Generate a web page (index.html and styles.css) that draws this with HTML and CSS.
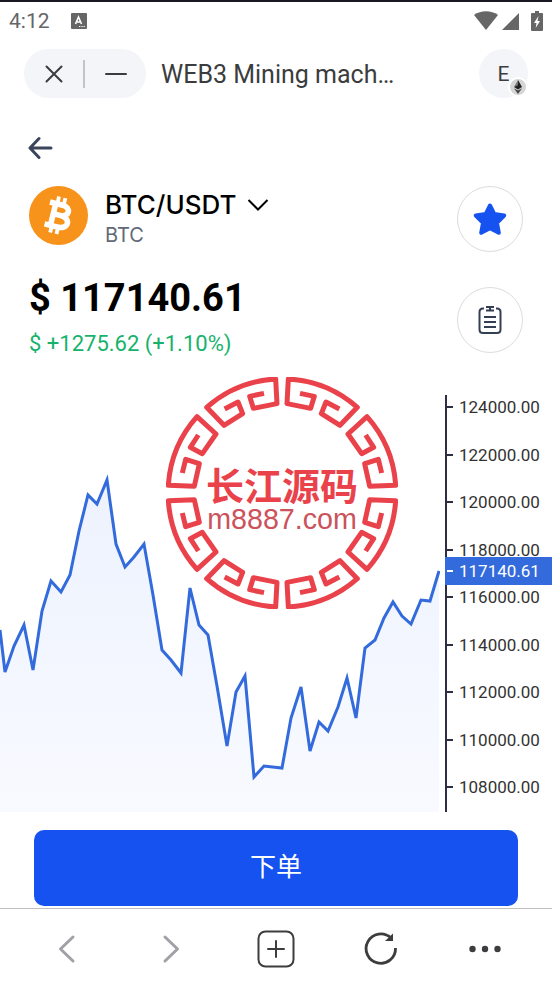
FILE: index.html
```html
<!DOCTYPE html>
<html lang="zh">
<head>
    <meta charset="UTF-8">
    <meta name="viewport" content="width=device-width, initial-scale=1.0">
    <title>WEB3 Mining machine</title>
    <link rel="stylesheet" href="styles.css">
</head>
<body>
    <div class="status-bar">
        <span class="status-time">4:12</span>
        <svg class="status-app" width="16" height="16" viewBox="0 0 16 16">
            <rect width="16" height="16" rx="1" fill="#666"/>
            <path d="M4.500 11 7.500 4 10.500 11M5.500 9h4" fill="none" stroke="#fff" stroke-width="1.600"/>
            <path d="M8 13.500h1.300M10.300 13.500h1.300M12.500 13.500h1.300" stroke="#fff" stroke-width="1"/>
        </svg>
        <div class="status-right">
            <svg width="24" height="20" viewBox="0 0 24 20"><path d="M0 4C7-1 17-1 24 4L12 19z" fill="#666"/></svg>
            <svg width="17" height="20" viewBox="0 0 17 20"><path d="M17 2v17H0z" fill="#666"/></svg>
            <svg class="battery" width="12" height="20" viewBox="0 0 12 20">
                <path d="M4 0h4v2h3q1 0 1 1v16q0 1-1 1H1q-1 0-1-1V3q0-1 1-1h3z" fill="#666"/>
                <path d="M7.500 5 3 12h2.500l-.800 5L9 10H6.500z" fill="#fff"/>
            </svg>
        </div>
    </div>

    <header class="app-header">
        <div class="window-buttons">
            <button type="button" aria-label="关闭">
                <svg width="18" height="18" viewBox="0 0 18 18"><path d="M1.500 1.500l15 15M16.500 1.500l-15 15"/></svg>
            </button>
            <span class="separator"></span>
            <button type="button" aria-label="最小化">
                <svg width="22" height="18" viewBox="0 0 22 18"><path d="M1 9h20"/></svg>
            </button>
        </div>
        <h1>WEB3 Mining mach…</h1>
        <button type="button" class="network">E
            <svg class="network-badge" width="20" height="20" viewBox="0 0 20 20">
                <circle cx="10" cy="10" r="9" fill="#d5d5d5" stroke="#fff" stroke-width="2"/>
                <path d="M10 3 6 10l4-2z" fill="#777"/>
                <path d="M10 3l4 7-4-2zM6 10l4-2 4 2-4 2.500z" fill="#222"/>
                <path d="M6 11.200 10 17l4-5.800-4 2.400z" fill="#444"/>
            </svg>
        </button>
    </header>

    <main>
        <a href="#" class="back" aria-label="返回">
            <svg width="26" height="24" viewBox="0 0 26 24"><path d="M23 12H3M11 2.500 2 12l9 9.500"/></svg>
        </a>

        <section class="summary">
            <div class="summary-left">
                <div class="coin">
                    <svg class="coin-logo" width="59" height="59" viewBox="0 0 59 59">
                        <circle cx="29.500" cy="29.500" r="29.500" fill="#f7931a"/>
                        <g transform="rotate(14 29.500 29.500)" fill="none" stroke="#fff">
                            <path d="M18 18.500h13c9.500 0 9.500 10.500 0 10.500H24M31 29c12 0 12 12 0 12H18M24 18.500v22.500" stroke-width="5.600"/>
                            <path d="M25.500 11v7M32 11v7M25.500 41v7M32 41v7" stroke-width="3.800"/>
                        </g>
                    </svg>
                    <div class="coin-name">
                        <label class="pair">
                            <select aria-label="交易对">
                                <option>BTC/USDT</option>
                            </select>
                            <svg width="22" height="14" viewBox="0 0 22 14"><path d="M1.500 2 11 11.500 20.500 2"/></svg>
                        </label>
                        <span class="symbol">BTC</span>
                    </div>
                </div>
                <div class="price">$ 117140.61</div>
                <div class="change">$ +1275.62 (+1.10%)</div>
            </div>
            <div class="summary-right">
                <button type="button" class="round-button" aria-label="收藏">
                    <svg width="34" height="34" viewBox="0 0 34 34">
                        <path d="M17 3.500 21.200 12 31.200 13.500 24 20.800 25.800 30.800 17 26.200 8.200 30.800 10 20.800 2.800 13.500 12.800 12z" fill="#1652f0" stroke="#1652f0" stroke-width="4" stroke-linejoin="round"/>
                    </svg>
                </button>
                <button type="button" class="round-button" aria-label="订单">
                    <svg width="24" height="30" viewBox="0 0 24 30" fill="none" stroke="#353f54" stroke-width="2">
                        <path d="M6 3.500H5Q1.500 3.500 1.500 7v17.500Q1.500 28 5 28h14q3.500 0 3.500-3.500V7Q22.500 3.500 19 3.500h-1M8 2h8M8 5.500h8M12 2v3M6 12h12M6 17h12M6 22h12"/>
                    </svg>
                </button>
            </div>
        </section>

        <section class="chart">
            <svg class="plot" viewBox="0 0 440 417" preserveAspectRatio="none">
                <defs>
                    <linearGradient id="area" x1="0" y1="0" x2="0" y2="1">
                        <stop offset="0" stop-color="#edf2fe"/>
                        <stop offset="1" stop-color="#f8faff"/>
                    </linearGradient>
                </defs>
                <path fill="url(#area)" d="M0 417V235L5 277 14 251 24 230 33 275 42 216 51 186 61 197 70 180 79 136 88 100 97 109 107 85 116 149 125 172 134 162 144 149 153 200 162 255 171 265 181 278 190 193 199 230 208 240 217 291 227 351 236 297 245 281 254 382 264 371 282 373 291 323 301 292 310 356 319 327 328 336 338 312 347 283 356 323 365 253 375 245 384 223 393 207 402 221 411 229 421 205 430 206 439 176V417z"/>
                <polyline class="plot-line" points="0,235 5,277 14,251 24,230 33,275 42,216 51,186 61,197 70,180 79,136 88,100 97,109 107,85 116,149 125,172 134,162 144,149 153,200 162,255 171,265 181,278 190,193 199,230 208,240 217,291 227,351 236,297 245,281 254,382 264,371 282,373 291,323 301,292 310,356 319,327 328,336 338,312 347,283 356,323 365,253 375,245 384,223 393,207 402,221 411,229 421,205 430,206 439,176"/>
            </svg>
            <div class="axis">
                <span>124000.00</span>
                <span>122000.00</span>
                <span>120000.00</span>
                <span>118000.00</span>
                <span>116000.00</span>
                <span>114000.00</span>
                <span>112000.00</span>
                <span>110000.00</span>
                <span>108000.00</span>
                <span class="axis-current">117140.61</span>
            </div>

            <svg class="seal" viewBox="-348 -348 696 696">
                <defs>
                    <g id="quarter">
                        <path d="M-54-299-97-290-86-254-15-268-19-342A342 342 0 0 0-226-257L-174-203-118-238-132-273-172-252"/>
                        <path d="M-251-174-275-137-239-118-198-177-255-229A342 342 0 0 0-341-23L-263-20-248-88-289-101-299-60"/>
                    </g>
                </defs>
                <g class="seal-ring">
                    <use href="#quarter"/>
                    <use href="#quarter" transform="scale(-1 1)"/>
                    <use href="#quarter" transform="scale(1 -1)"/>
                    <use href="#quarter" transform="scale(-1 -1)"/>
                </g>
                <text class="seal-name" x="0" y="22">长江源码</text>
                <text class="seal-site" x="0" y="108">m8887.com</text>
            </svg>
        </section>

        <button type="button" class="order-button">下单</button>
    </main>

    <nav class="browser-nav">
        <button type="button" aria-label="后退" class="muted">
            <svg width="40" height="40" viewBox="0 0 40 40"><path d="M26 8 13.500 20 26 32"/></svg>
        </button>
        <button type="button" aria-label="前进" class="muted">
            <svg width="40" height="40" viewBox="0 0 40 40"><path d="M13 8l12.500 12L13 32"/></svg>
        </button>
        <button type="button" aria-label="新标签页">
            <svg width="40" height="40" viewBox="0 0 40 40"><rect x="2.500" y="2.500" width="35" height="35" rx="7"/><path d="M12 20h16M20 12v16"/></svg>
        </button>
        <button type="button" aria-label="刷新">
            <svg width="40" height="40" viewBox="0 0 40 40"><path d="M35.500 19A14.700 14.700 0 1 1 31 9" stroke-width="2.800" stroke-linecap="butt"/><path d="M33 4.500v7.500h-8z" fill="#3c3d3f" stroke="none"/></svg>
        </button>
        <button type="button" aria-label="更多">
            <svg width="40" height="40" viewBox="0 0 40 40"><g fill="#3c3d3f" stroke="none"><circle cx="7.500" cy="20" r="3.200"/><circle cx="20" cy="20" r="3.200"/><circle cx="32.500" cy="20" r="3.200"/></g></svg>
        </button>
    </nav>
</body>
</html>
```

FILE: styles.css
```css
body {
    margin: 0;
    border-top: 2px solid #1a1822;
    font-family: Roboto, "Noto Sans CJK SC", sans-serif;
    background-color: #fff;
    color: #000;
}

svg {
    display: block;
    flex-shrink: 0;
}

button {
    padding: 0;
    border: none;
    background: none;
    font-family: inherit;
    cursor: pointer;
}

/* 状态栏 */
.status-bar {
    display: flex;
    align-items: center;
    height: 38px;
    padding: 0 9px;
    color: #666;
}

.status-time {
    font-size: 21px;
}

.status-app {
    margin-left: 21px;
}

.status-right {
    display: flex;
    gap: 4px;
    margin-left: auto;
}

.battery {
    margin-left: 8px;
}

/* 顶部栏 */
.app-header {
    display: flex;
    align-items: center;
    padding: 9px 24px;
    color: #3b3c3e;
}

.window-buttons {
    display: flex;
    align-items: center;
    justify-content: space-between;
    box-sizing: border-box;
    width: 122px;
    height: 49px;
    padding: 0 19px 0 21px;
    border-radius: 25px;
    background-color: #f4f5f8;
    flex-shrink: 0;
}

.window-buttons path {
    fill: none;
    stroke: #3b3c3e;
    stroke-width: 2;
    stroke-linecap: round;
}

.separator {
    width: 2px;
    height: 28px;
    background-color: #c3c4c7;
}

.app-header h1 {
    margin: 0 0 0 15px;
    padding-top: 2px;
    font-size: 25px;
    font-weight: 400;
    line-height: 30px;
}

.network {
    position: relative;
    width: 49px;
    height: 49px;
    margin-left: auto;
    border-radius: 50%;
    background-color: #f4f5f8;
    color: #3b3c3e;
    font-size: 21px;
}

.network-badge {
    position: absolute;
    right: 0;
    bottom: 1px;
}

/* 行情概要 */
.back {
    display: block;
    width: 26px;
    margin: 29px 0 26px 28px;
}

.back path {
    fill: none;
    stroke: #3a455b;
    stroke-width: 3;
    stroke-linecap: round;
    stroke-linejoin: round;
}

.summary {
    display: flex;
    justify-content: space-between;
    padding: 0 29px;
}

.coin {
    display: flex;
    gap: 17px;
}

.coin-name {
    padding-top: 4px;
}

.pair {
    display: flex;
    align-items: center;
    gap: 10px;
}

.pair select {
    appearance: none;
    height: 30px;
    padding: 0;
    border: none;
    background: none;
    color: #000;
    font-family: Inter, sans-serif;
    font-size: 26px;
    font-weight: 500;
    line-height: 30px;
}

.pair path {
    fill: none;
    stroke: #000;
    stroke-width: 2;
}

.symbol {
    display: block;
    font-family: Inter, sans-serif;
    font-size: 20px;
    line-height: 30px;
    color: #636977;
}

.price {
    margin-top: 25px;
    font-size: 38px;
    font-weight: 700;
    line-height: 46px;
}

.change {
    margin-top: 10px;
    font-size: 22px;
    line-height: 26px;
    color: #16b26c;
}

.summary-right {
    display: flex;
    flex-direction: column;
    gap: 35px;
}

.round-button {
    display: flex;
    align-items: center;
    justify-content: center;
    width: 66px;
    height: 66px;
    border: 1px solid #dcdcdc;
    border-radius: 50%;
}

/* 走势图 */
.chart {
    position: relative;
    display: flex;
    margin-top: 38px;
}

.plot {
    flex: 1;
    min-width: 0;
    height: 417px;
}

.plot-line {
    fill: none;
    stroke: #336bdc;
    stroke-width: 3;
    vector-effect: non-scaling-stroke;
}

.axis {
    position: relative;
    display: flex;
    flex-direction: column;
    justify-content: space-between;
    box-sizing: border-box;
    width: 107px;
    margin-left: 5px;
    padding: 2px 0 15px;
    border-left: 2px solid #2d2d44;
    color: #333;
    font-size: 17px;
    line-height: 20px;
}

.axis span {
    display: flex;
    align-items: center;
    gap: 6px;
}

.axis span::before {
    content: "";
    width: 6px;
    height: 2px;
    background-color: #2d2d44;
}

.axis .axis-current {
    position: absolute;
    top: 162px;
    left: -2px;
    right: 0;
    height: 28px;
    padding-left: 2px;
    background-color: #336bdc;
    color: #fff;
}

.axis .axis-current::before {
    background-color: #fff;
}

.seal {
    position: absolute;
    top: -18px;
    left: 30%;
    width: 232px;
    height: 232px;
}

.seal-ring {
    fill: none;
    stroke: #ea424b;
    stroke-width: 15;
    stroke-linejoin: round;
}

.seal text {
    text-anchor: middle;
}

.seal-name {
    fill: #ea424b;
    font-family: "Noto Sans CJK SC", sans-serif;
    font-size: 114px;
    font-weight: 700;
}

.seal-site {
    fill: #cc525b;
    font-family: "Liberation Sans", sans-serif;
    font-size: 86px;
}

/* 下单按钮 */
.order-button {
    display: block;
    width: calc(100% - 68px);
    height: 76px;
    margin: 18px 34px 2px;
    padding-bottom: 8px;
    border-radius: 10px;
    background-color: #1652f0;
    color: #fff;
    font-size: 26px;
}

/* 浏览器导航 */
.browser-nav {
    display: flex;
    justify-content: space-around;
    padding: 20px 15px 16px;
    border-top: 1px solid #bfbfc1;
}

.browser-nav svg {
    fill: none;
    stroke: #3c3d3f;
    stroke-width: 2;
    stroke-linecap: round;
    stroke-linejoin: round;
}

.browser-nav .muted svg {
    stroke: #a0a1a6;
    stroke-width: 3;
}
```
